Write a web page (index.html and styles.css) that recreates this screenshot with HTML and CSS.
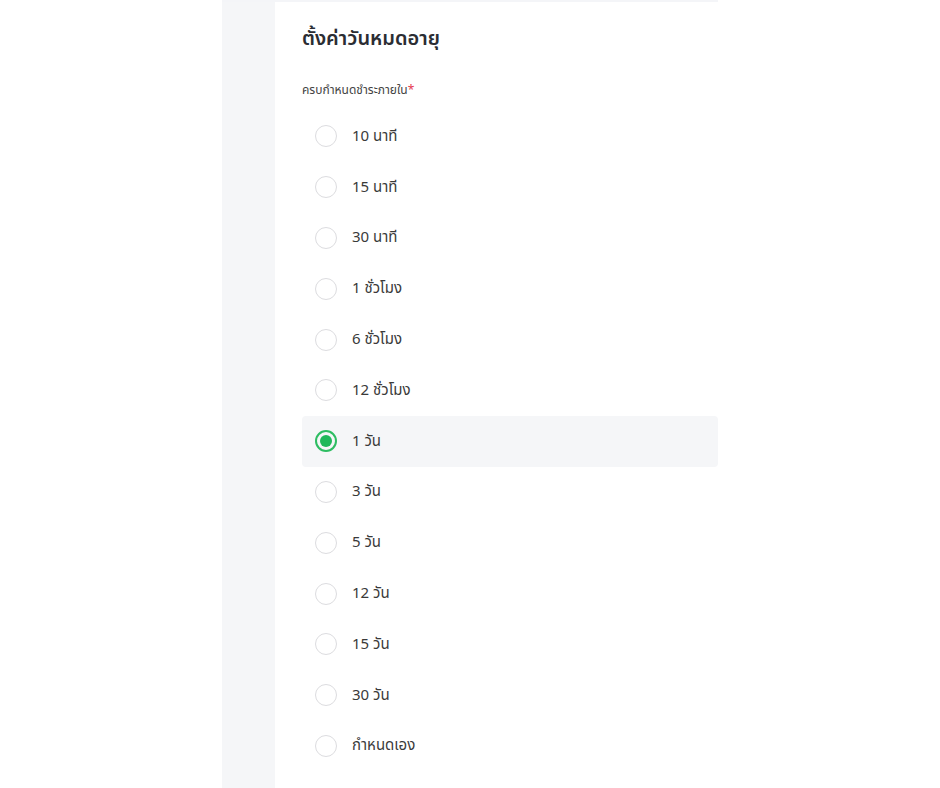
FILE: index.html
```html
<!DOCTYPE html>
<html lang="th">
<head>
<meta charset="UTF-8">
<meta name="viewport" content="width=device-width, initial-scale=1.0">
<title>ตั้งค่าวันหมดอายุ</title>
<link rel="stylesheet" href="styles.css">
</head>
<body>
<div class="page">
  <!-- แถบซ้าย -->
  <div class="side"></div>
  <div class="panel">
    <h2 class="title">ตั้งค่าวันหมดอายุ</h2>
    <div class="label">ครบกำหนดชำระภายใน<span class="req">*</span></div>
    <div class="options">
      <label class="opt"><span class="radio"></span>10 นาที</label>
      <label class="opt"><span class="radio"></span>15 นาที</label>
      <label class="opt"><span class="radio"></span>30 นาที</label>
      <label class="opt"><span class="radio"></span>1 ชั่วโมง</label>
      <label class="opt"><span class="radio"></span>6 ชั่วโมง</label>
      <label class="opt"><span class="radio"></span>12 ชั่วโมง</label>
      <label class="opt selected"><span class="radio"></span>1 วัน</label>
      <label class="opt"><span class="radio"></span>3 วัน</label>
      <label class="opt"><span class="radio"></span>5 วัน</label>
      <label class="opt"><span class="radio"></span>12 วัน</label>
      <label class="opt"><span class="radio"></span>15 วัน</label>
      <label class="opt"><span class="radio"></span>30 วัน</label>
      <label class="opt"><span class="radio"></span>กำหนดเอง</label>
    </div>
  </div>
</div>
</body>
</html>
```

FILE: styles.css
```css
body {
  margin: 0;
  background: #fff;
  font-family: "Noto Sans Thai", "Noto Sans", sans-serif;
  color: #333;
}
.page {
  display: flex;
  margin-left: 222px;
  width: 496px;
  height: 788px;
  border-top: 2px solid #f4f5f8;
  box-sizing: border-box;
}
.side {
  width: 53px;
  background: #f5f6f8;
}
.panel {
  flex: 1;
  padding: 17px 0 0 27px;
}
.title {
  margin: 0;
  font-size: 20px;
  font-weight: 600;
  color: #2b2d33;
  line-height: 40px;
}
.label {
  margin-top: 21px;
  font-size: 12px;
  color: #444;
  line-height: 20px;
}
.req {
  color: #e53950;
}
.options {
  margin-top: 11px;
  display: flex;
  flex-direction: column;
}
.opt {
  display: flex;
  align-items: center;
  height: 50.8px;
  padding-left: 13px;
  font-size: 15px;
  color: #3a3a3a;
  border-radius: 4px;
}
.opt.selected {
  background: #f5f6f8;
}
.radio {
  width: 22px;
  height: 22px;
  box-sizing: border-box;
  border: 1.5px solid #dcdcdf;
  border-radius: 50%;
  margin-right: 15px;
  display: flex;
  align-items: center;
  justify-content: center;
}
.selected .radio {
  border: 2px solid #2dbd62;
}
.selected .radio::after {
  content: "";
  width: 12px;
  height: 12px;
  border-radius: 50%;
  background: #1fb85a;
}
```
